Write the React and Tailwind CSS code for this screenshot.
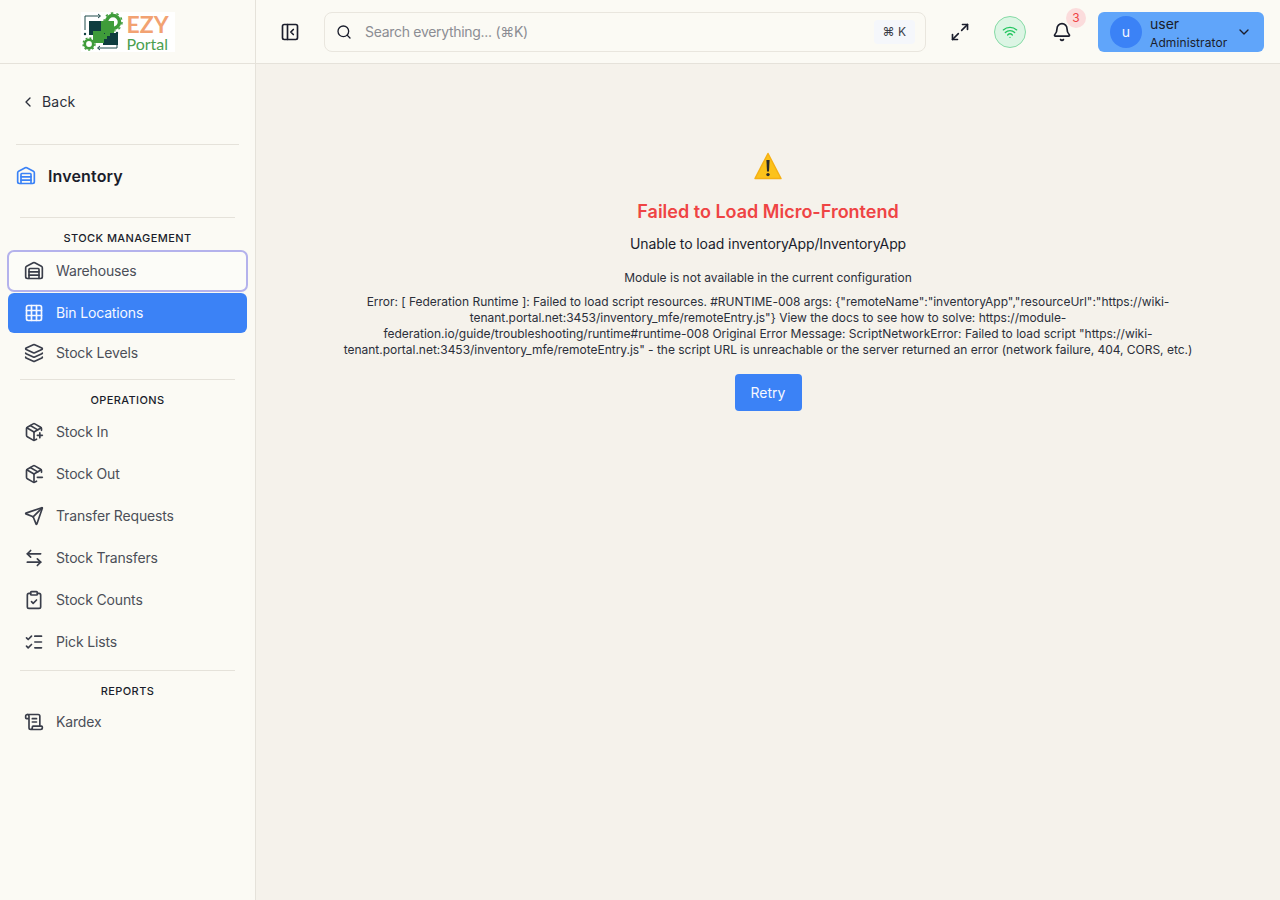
import {
  ArrowLeftRight,
  Bell,
  ChevronDown,
  ChevronLeft,
  ClipboardCheck,
  Grid3x3,
  Layers,
  ListChecks,
  Maximize2,
  PackageMinus,
  PackagePlus,
  PanelLeftClose,
  ScrollText,
  Search,
  Send,
  Warehouse,
  Wifi,
} from "lucide-react";

const font = { fontFamily: "Inter, 'Noto Sans', sans-serif" };

const Logo = () => (
  <div className="flex h-10 w-[94px] items-center bg-white">
    <svg width="44" height="40" viewBox="0 0 44 40" fill="none" className="shrink-0">
      {/* gears */}
      <circle cx="32" cy="10" r="6.5" stroke="#3f9c3a" strokeWidth="3.5" />
      <circle cx="32" cy="10" r="9" stroke="#3f9c3a" strokeWidth="1.5" strokeDasharray="2.5 3.2" />
      <circle cx="8" cy="32" r="4.2" stroke="#3f9c3a" strokeWidth="2.6" />
      <circle cx="8" cy="32" r="6" stroke="#3f9c3a" strokeWidth="1.4" strokeDasharray="2 2" />
      {/* frame arrows */}
      <path d="M4 18V4h15M17 2l2.5 2-2.5 2" stroke="#1f4a4a" strokeWidth="1" />
      <path d="M36 24v12H17M19 34l-2.5 2 2.5 2" stroke="#1f4a4a" strokeWidth="1" />
      <circle cx="4" cy="22" r="1.2" fill="#0f3d3f" />
      <circle cx="36" cy="21" r="1.2" fill="#0f3d3f" />
      {/* puzzle */}
      <path d="M8 9h13v14H8z" fill="#0f3d3f" />
      <path d="M22 21h15v12H22z" fill="#0f3d3f" />
      <path d="M20 9h13v12h-4v3h-5v-3h-4z" fill="#3f9c3a" />
      <path d="M12 19h11v3h3v5h-3v4H12z" fill="#3f9c3a" />
    </svg>
    <div className="ml-0.5 flex flex-col pt-[3px] leading-none">
      <span className="font-['Lato',sans-serif] text-[23px] leading-[21px] font-bold text-[#f2a272]">EZY</span>
      <span className="font-['Lato',sans-serif] text-base leading-[17px] text-[#4b9f4f]">Portal</span>
    </div>
  </div>
);

const Item = ({ icon: Icon, label, className = "mt-0.5 text-[#4b4f58]", iconClass = "text-[#3a3e4a]" }) => (
  <a className={`flex h-10 items-center gap-3 rounded-md px-4 text-sm tracking-[-0.15px] ${className}`}>
    <Icon size={20} strokeWidth={2} className={`shrink-0 ${iconClass}`} />
    {label}
  </a>
);

const Section = ({ title, className }) => (
  <div className="flex flex-col">
    <div className="mx-3 border-t border-[#e5e2da]" />
    <div
      className={`mt-[13px] text-center text-[11px] leading-[14px] font-medium tracking-[0.4px] text-[#1a1d2b] ${className}`}
    >
      {title}
    </div>
  </div>
);

const Sidebar = () => (
  <aside className="flex h-full w-64 shrink-0 flex-col border-r border-[#e5e2da] bg-[#fbfaf4]">
    <div className="flex h-16 shrink-0 items-center justify-center border-b border-[#e5e2da]">
      <Logo />
    </div>
    <div className="flex h-[76px] items-start px-5 pt-7">
      <a className="flex h-5 items-center gap-1.5 text-sm tracking-[0.2px] text-[#2b2f3a]">
        <ChevronLeft size={16} strokeWidth={2} />
        Back
      </a>
    </div>
    <div className="mx-4 mt-1 border-t border-[#e5e2da]" />
    <div className="mb-2.5 flex h-[62px] items-center gap-3 px-4">
      <Warehouse size={20} strokeWidth={2} className="text-[#3b82f6]" />
      <span className="text-base font-semibold tracking-[0.15px] text-[#1a1d2b]">Inventory</span>
    </div>
    <nav className="flex flex-col px-2">
      <Section title="STOCK MANAGEMENT" className="mb-1.5" />
      <Item
        icon={Warehouse}
        label="Warehouses"
        className="bg-white/40 text-[#4b4f58] outline-2 -outline-offset-1 outline-[#b4b2ec]"
      />
      <Item
        icon={Grid3x3}
        label="Bin Locations"
        className="mt-0.5 bg-[#3b82f6] text-[#f5f8ff]"
        iconClass="text-[#f5f8ff]"
      />
      <Item icon={Layers} label="Stock Levels" className="text-[#4b4f58]" />
      <div className="mt-1.5">
        <Section title="OPERATIONS" className="mb-[5px]" />
      </div>
      <Item icon={PackagePlus} label="Stock In" className="text-[#4b4f58]" />
      <Item icon={PackageMinus} label="Stock Out" />
      <Item icon={Send} label="Transfer Requests" />
      <Item icon={ArrowLeftRight} label="Stock Transfers" />
      <Item icon={ClipboardCheck} label="Stock Counts" />
      <Item icon={ListChecks} label="Pick Lists" />
      <div className="mt-2">
        <Section title="REPORTS" className="mb-1" />
      </div>
      <Item icon={ScrollText} label="Kardex" className="text-[#4b4f58]" />
    </nav>
  </aside>
);

const Header = () => (
  <header className="flex h-16 shrink-0 items-center border-b border-[#e5e2da] bg-[#fbfaf4] pr-4 pl-6">
    <PanelLeftClose size={20} strokeWidth={2} className="text-[#1a1d2b]" />
    <div className="ml-6 flex h-10 w-[602px] items-center rounded-lg border border-[#e9e6de] pr-2.5 pl-[11px]">
      <Search size={16} strokeWidth={2} className="text-[#1a1d2b]" />
      <span className="ml-[13px] flex-1 text-sm tracking-[-0.3px] text-[#8b8d93]">Search everything... (⌘K)</span>
      <span className="flex h-6 items-center rounded bg-[#f5f7fb] px-[9px] text-xs text-[#3b3e48]">⌘ K</span>
    </div>
    <button className="ml-6 text-[#1a1d2b]">
      <Maximize2 size={20} strokeWidth={2} />
    </button>
    <div className="ml-6 flex h-8 w-8 items-center justify-center rounded-full border border-[#86dba6] bg-[#dcf5e4]">
      <Wifi size={16} strokeWidth={2} className="text-[#22c55e]" />
    </div>
    <div className="relative ml-[26px] flex h-5 w-5 items-center justify-center">
      <Bell size={20} strokeWidth={2} className="text-[#1a1d2b]" />
      <span className="absolute -top-[14px] left-[14px] flex h-5 w-5 items-center justify-center rounded-full bg-[#fbdcdc] text-xs text-[#ef4444]">
        3
      </span>
    </div>
    <div className="ml-[26px] flex h-10 w-[166px] items-center rounded-md bg-[#60a5fa] pr-3 pl-3">
      <span className="flex h-8 w-8 items-center justify-center rounded-full bg-[#3b82f6] text-sm text-[#f5f8ff]">u</span>
      <div className="mt-0.5 ml-2 flex flex-1 flex-col">
        <span className="text-sm leading-[18px] text-[#1a1d2b]">user</span>
        <span className="mt-0.5 text-xs leading-4 tracking-[0.1px] text-[#1a1d2b]">Administrator</span>
      </div>
      <ChevronDown size={16} strokeWidth={2} className="text-[#1a1d2b]" />
    </div>
  </header>
);

const WarningIcon = () => (
  <svg width="28" height="28" viewBox="0 0 28 28">
    <path d="M14 1.5 27 26.5H1z" fill="#fcc21b" stroke="#f5b014" strokeWidth="1.5" strokeLinejoin="round" />
    <path d="M12.4 8h3.2l-.6 11.5h-2z" fill="#2a2a2a" />
    <circle cx="14" cy="22.6" r="1.7" fill="#2a2a2a" />
  </svg>
);

const ErrorPanel = () => (
  <main className="flex flex-1 flex-col items-center bg-[#f5f2eb] pt-[88px] text-center">
    <WarningIcon />
    <h1 className="mt-[18px] text-lg leading-7 font-semibold text-[#ef4444]">Failed to Load Micro-Frontend</h1>
    <p className="mt-2 text-sm leading-5 tracking-[-0.1px] text-[#1a1d2b]">Unable to load inventoryApp/InventoryApp</p>
    <p className="mt-4 text-xs leading-4 text-[#2b2f3a]">Module is not available in the current configuration</p>
    <p className="mt-2 w-[880px] text-xs leading-4 tracking-[-0.02px] text-[#2b2f3a]">
      Error: [ Federation Runtime ]: Failed to load script resources. #RUNTIME-008 args: {'{"remoteName":"inventoryApp","resourceUrl":"https://wiki-'}
      <br />
      {'tenant.portal.net:3453/inventory_mfe/remoteEntry.js"}'} View the docs to see how to solve: https://module-
      <br />
      federation.io/guide/troubleshooting/runtime#runtime-008 Original Error Message: ScriptNetworkError: Failed to load script "https://wiki-
      <br />
      tenant.portal.net:3453/inventory_mfe/remoteEntry.js" - the script URL is unreachable or the server returned an error (network failure, 404, CORS, etc.)
    </p>
    <button className="mt-4 h-[37px] w-[67px] rounded bg-[#3b82f6] text-sm text-[#f5f8ff]">Retry</button>
  </main>
);

export default function App() {
  return (
    <div className="flex h-[900px] w-full overflow-hidden bg-[#f5f2eb]" style={font}>
      <Sidebar />
      <div className="flex min-w-0 flex-1 flex-col">
        <Header />
        <ErrorPanel />
      </div>
    </div>
  );
}
